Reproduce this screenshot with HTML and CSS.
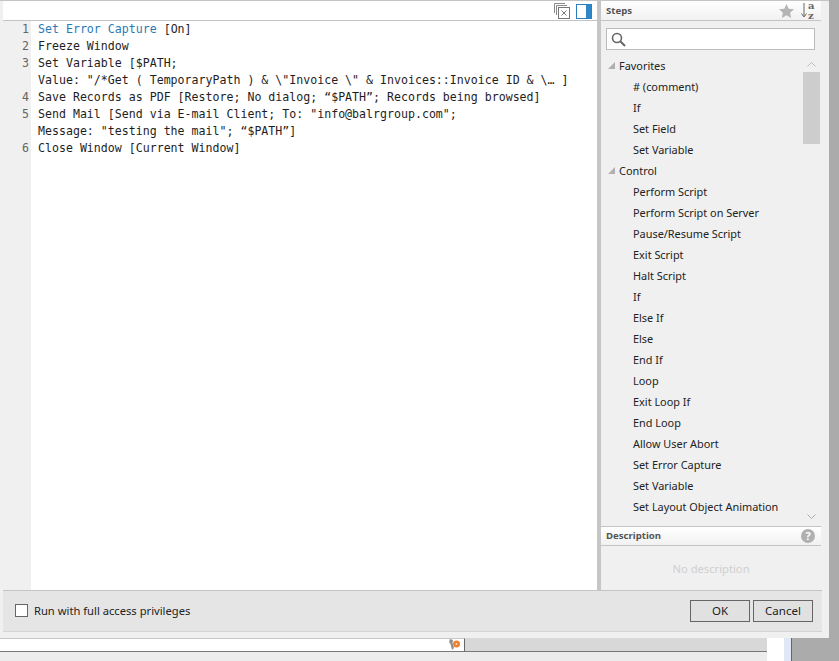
FILE: index.html
```html
<!DOCTYPE html>
<html lang="en">
<head>
<meta charset="utf-8">
<title>Script Workspace</title>
<link rel="stylesheet" href="styles.css">
</head>
<body>
<div class="dialog">
  <div class="main">
    <section class="editor">
      <div class="editor-bar">
        <svg class="ic-windows" width="17" height="17" viewBox="0 0 17 17"><path d="M.5 10V.5h10.500M2.500 12V2.500h10.500" fill="none" stroke="#8a8a8a"/><rect x="4.500" y="4.500" width="11" height="11" fill="#fff" stroke="#777"/><path d="M7.500 7.500l5 5m0-5l-5 5" stroke="#777" fill="none"/></svg>
        <svg class="ic-panel" width="16" height="15" viewBox="0 0 16 15"><rect x=".5" y=".5" width="15" height="14" fill="#fff" stroke="#2b7fc0"/><rect x="10" y="1" width="5" height="13" fill="#2f86c8"/></svg>
      </div>
      <div class="editor-body">
        <div class="gutter">
          <div class="ln">1</div><div class="ln">2</div><div class="ln">3</div><div class="ln"></div><div class="ln">4</div><div class="ln">5</div><div class="ln"></div><div class="ln">6</div>
        </div>
        <div class="code">
          <div class="cl"><span class="kw">Set Error Capture</span> [On]</div>
          <div class="cl">Freeze Window</div>
          <div class="cl">Set Variable [$PATH;</div>
          <div class="cl">Value: "/*Get ( TemporaryPath ) &amp; \"Invoice \" &amp; Invoices::Invoice ID &amp; \… ]</div>
          <div class="cl">Save Records as PDF [Restore; No dialog; “$PATH”; Records being browsed]</div>
          <div class="cl">Send Mail [Send via E-mail Client; To: "info@balrgroup.com";</div>
          <div class="cl">Message: "testing the mail"; “$PATH”]</div>
          <div class="cl">Close Window [Current Window]</div>
        </div>
      </div>
    </section>
    <div class="divider"></div>
    <aside class="panel">
      <div class="panel-head">
        <span class="head-title">Steps</span>
        <svg class="ic-star" width="15" height="14" viewBox="0 0 15 14"><path d="M7.500 0l2.200 4.700 5.300.6-3.900 3.500 1.100 5.200-4.700-2.700-4.700 2.700 1.100-5.200L0 5.300l5.300-.6z" fill="#b4b4b4"/></svg>
        <span class="sort">
          <svg width="6" height="15" viewBox="0 0 6 15"><path d="M3 0v13M.5 10.500L3 14l2.500-3.500" fill="none" stroke="#666"/></svg>
          <span class="sort-letters"><span>a</span><span>z</span></span>
        </span>
      </div>
      <div class="search">
        <svg width="15" height="15" viewBox="0 0 15 15"><circle cx="6" cy="6" r="4.500" fill="none" stroke="#666" stroke-width="1.600"/><path d="M9.500 9.500l4.500 4.500" stroke="#666" stroke-width="2"/></svg>
      </div>
      <div class="list-wrap">
        <div class="list">
          <div class="group"><span class="tri"></span>Favorites</div>
          <div class="item"># (comment)</div>
          <div class="item">If</div>
          <div class="item">Set Field</div>
          <div class="item">Set Variable</div>
          <div class="group"><span class="tri"></span>Control</div>
          <div class="item">Perform Script</div>
          <div class="item">Perform Script on Server</div>
          <div class="item">Pause/Resume Script</div>
          <div class="item">Exit Script</div>
          <div class="item">Halt Script</div>
          <div class="item">If</div>
          <div class="item">Else If</div>
          <div class="item">Else</div>
          <div class="item">End If</div>
          <div class="item">Loop</div>
          <div class="item">Exit Loop If</div>
          <div class="item">End Loop</div>
          <div class="item">Allow User Abort</div>
          <div class="item">Set Error Capture</div>
          <div class="item">Set Variable</div>
          <div class="item">Set Layout Object Animation</div>
        </div>
        <div class="scrollbar">
          <svg class="chev" width="9" height="5" viewBox="0 0 9 5"><path d="M.5 4.500l4-4 4 4" fill="none" stroke="#bdbdbd"/></svg>
          <div class="thumb"></div>
          <svg class="chev chev-down" width="9" height="5" viewBox="0 0 9 5"><path d="M.5.500l4 4 4-4" fill="none" stroke="#a8a8a8"/></svg>
        </div>
      </div>
      <div class="desc-head">
        <span class="head-title">Description</span>
        <span class="help">?</span>
      </div>
      <div class="desc-body">No description</div>
    </aside>
  </div>
  <footer class="footer">
    <label class="check"><span class="box"></span>Run with full access privileges</label>
    <div class="buttons">
      <button class="btn" type="button">OK</button>
      <button class="btn" type="button">Cancel</button>
    </div>
  </footer>
</div>
<div class="under">
  <div class="under-field">
    <svg width="14" height="12" viewBox="0 0 14 12"><path d="M2 0l3 1-.5 3L6 9 4 11 2.500 5 1 3z" fill="#8f8f8f"/><circle cx="8.500" cy="5" r="3.500" fill="#f0802c"/><circle cx="8.500" cy="5" r="1" fill="#fbd9b8"/></svg>
  </div>
  <div class="under-gray"></div>
  <div class="under-white"></div>
  <div class="under-blue"></div>
</div>
</body>
</html>
```
FILE: styles.css
```css
* { box-sizing: border-box; }
html, body { margin: 0; padding: 0; }
body {
  width: 839px;
  height: 661px;
  overflow: hidden;
  background: #ababab;
  font-family: "Noto Sans", "Open Sans", sans-serif;
  color: #222;
}
.dialog {
  width: 829px;
  height: 638px;
  background: #f0f0f0;
  border-top: 1px solid #c4c4c4;
  padding: 0 7px 6px 3px;
  display: flex;
  flex-direction: column;
}
.main { flex: 1; display: flex; min-height: 0; }
.editor {
  width: 594px;
  background: #fff;
  display: flex;
  flex-direction: column;
}
.editor-bar {
  height: 20px;
  border-bottom: 1px solid #c4c4c4;
  display: flex;
  align-items: flex-start;
  padding: 2px 5px 0 551px;
}
.ic-panel { margin: 1px 0 0 5px; }
.editor-body { flex: 1; display: flex; }
.gutter {
  width: 28px;
  background: #f0f0f0;
  padding-right: 2px;
  text-align: right;
  color: #666;
}
.ln, .cl {
  height: 17px;
  line-height: 17px;
  font-family: "DejaVu Sans Mono", "Liberation Mono", monospace;
  font-size: 11.6px;
  white-space: pre;
}
.code { padding-left: 7px; color: #1e1e1e; }
.kw { color: #2a7ab8; }
.divider { width: 4px; background: #c6c6c6; }
.panel {
  width: 220px;
  background: #f0f0f0;
  display: flex;
  flex-direction: column;
}
.panel-head {
  height: 20px;
  background: linear-gradient(#fff, #f1f1f1);
  border-bottom: 1px solid #c4c4c4;
  display: flex;
  align-items: center;
  padding: 0 5px;
}
.head-title {
  font-size: 9.6px;
  font-weight: 700;
  color: #555;
  flex: 1;
  padding-bottom: 1px;
}
.ic-star { margin-right: 7px; margin-top: 1px; }
.sort { display: flex; align-items: center; gap: 1px; width: 15px; }
.sort-letters {
  display: flex;
  flex-direction: column;
  font-family: "DejaVu Serif", serif;
  font-weight: 700;
  font-size: 10px;
  line-height: 10px;
  color: #666;
}
.search {
  height: 22px;
  margin: 7px 6px 0 5px;
  background: #fff;
  border: 1px solid #bcbcbc;
  padding: 3px 0 0 4px;
  line-height: 0;
}
.list-wrap { flex: 1; position: relative; display: flex; min-height: 0; overflow: hidden; }
.list { flex: 1; padding-top: 5px; }
.group, .item {
  height: 21px;
  line-height: 21px;
  font-size: 10.9px;
  color: #222;
  white-space: nowrap;
}
.group { padding-left: 7px; display: flex; align-items: center; }
.item { padding-left: 32px; }
.tri {
  width: 0;
  height: 0;
  margin-right: 4px;
  border-style: solid;
  border-width: 0 0 7px 7px;
  border-color: transparent transparent #b0b0b0 transparent;
}
.scrollbar {
  width: 17px;
  margin-right: 1px;
  display: flex;
  flex-direction: column;
  align-items: center;
  position: relative;
}
.chev { margin-top: 12px; flex: none; }
.thumb { width: 17px; height: 72px; margin-top: 5px; background: #cdcdcd; }
.chev-down { margin-top: auto; margin-bottom: 7px; }
.desc-head {
  height: 20px;
  background: linear-gradient(#fff, #f1f1f1);
  border-top: 1px solid #c4c4c4;
  border-bottom: 1px solid #c4c4c4;
  display: flex;
  align-items: center;
  padding: 0 5px;
}
.help {
  width: 14px;
  height: 14px;
  border-radius: 50%;
  background: #b0b0b0;
  color: #fff;
  font-size: 11px;
  font-weight: 700;
  line-height: 14px;
  text-align: center;
  margin-right: 1px;
}
.desc-body {
  height: 44px;
  text-align: center;
  font-size: 11.2px;
  line-height: 45px;
  color: #cfcfcf;
}
.footer {
  height: 42px;
  background: #e6e5e5;
  border-top: 1px solid #c4c4c4;
  border-bottom: 1px solid #d4d4d4;
  display: flex;
  align-items: flex-start;
  justify-content: space-between;
  flex: none;
  padding: 9px 9px 0 12px;
}
.check {
  display: flex;
  align-items: center;
  gap: 6px;
  font-size: 11.2px;
  color: #222;
  height: 20px;
}
.box {
  width: 13px;
  height: 13px;
  background: #fff;
  border: 1px solid #666;
  margin-top: 1px;
}
.buttons { display: flex; gap: 3px; }
.btn {
  width: 60px;
  height: 22px;
  padding: 0 0 2px;
  background: #e1e1e1;
  border: 1px solid #666;
  border-radius: 0;
  font-family: inherit;
  font-size: 11.5px;
  color: #222;
}
.under { width: 792px; height: 23px; display: flex; background: #ececec; }
.under-field {
  width: 465px;
  height: 14px;
  background: #fff;
  border-top: 1px solid #c8c8c8;
  border-bottom: 1px solid #777;
  border-right: 1px solid #666;
  display: flex;
  justify-content: flex-end;
  align-items: flex-start;
  padding-right: 2px;
  line-height: 0;
}
.under-gray {
  width: 302px;
  height: 14px;
  background: #d8d8d8;
  border-bottom: 1px solid #777;
}
.under-white { width: 17px; background: #fff; }
.under-blue { width: 8px; background: #dfe8f4; border-right: 1px solid #666; }
```
